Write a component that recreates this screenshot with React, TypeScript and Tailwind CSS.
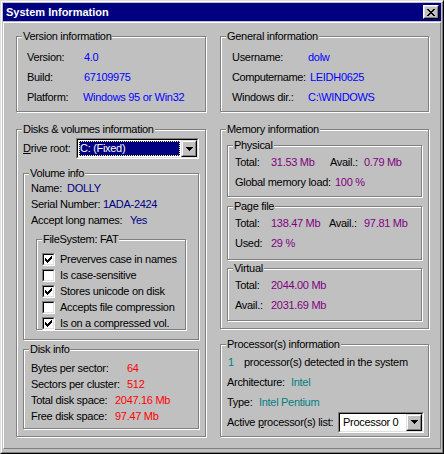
import React from "react";

// Win95-style "System Information" dialog

function Group({
  title,
  className = "",
  children,
}: {
  title: string;
  className?: string;
  children?: React.ReactNode;
}) {
  return (
    <div
      className={`relative shrink-0 border border-[#808080] shadow-[inset_1px_1px_0_#fff,1px_1px_0_#fff] ${className}`}
    >
      <span className="absolute left-[5px] top-[-7px] bg-[#c0c0c0] px-px leading-[13px] whitespace-nowrap">
        {title}
      </span>
      {children}
    </div>
  );
}

function Check({ checked }: { checked?: boolean }) {
  return (
    <div className="h-[13px] w-[13px] shrink-0 border border-t-[#808080] border-l-[#808080] border-r-white border-b-white">
      <div className="flex h-full w-full items-center justify-center border border-t-black border-l-black border-r-[#dfdfdf] border-b-[#dfdfdf] bg-white">
        {checked && (
          <svg width="7" height="7" shapeRendering="crispEdges">
            <rect x="6" y="0" width="1" height="1" />
            <rect x="5" y="1" width="2" height="1" />
            <rect x="0" y="2" width="1" height="1" />
            <rect x="4" y="2" width="3" height="1" />
            <rect x="0" y="3" width="2" height="1" />
            <rect x="3" y="3" width="3" height="1" />
            <rect x="0" y="4" width="5" height="1" />
            <rect x="1" y="5" width="3" height="1" />
            <rect x="2" y="6" width="1" height="1" />
          </svg>
        )}
      </div>
    </div>
  );
}

function DropButton() {
  return (
    <div className="h-full w-[16px] shrink-0 border border-t-[#dfdfdf] border-l-[#dfdfdf] border-r-black border-b-black">
      <div className="flex h-full items-center justify-center border border-t-white border-l-white border-r-[#808080] border-b-[#808080] bg-[#c0c0c0]">
        <svg width="7" height="4" shapeRendering="crispEdges">
          <rect x="0" y="0" width="7" height="1" />
          <rect x="1" y="1" width="5" height="1" />
          <rect x="2" y="2" width="3" height="1" />
          <rect x="3" y="3" width="1" height="1" />
        </svg>
      </div>
    </div>
  );
}

function Combo({
  className,
  text,
  selected,
}: {
  className: string;
  text: string;
  selected?: boolean;
}) {
  return (
    <div
      className={`h-[21px] shrink-0 border border-t-[#808080] border-l-[#808080] border-r-white border-b-white ${className}`}
    >
      <div className="flex h-full border border-t-black border-l-black border-r-[#dfdfdf] border-b-[#dfdfdf] bg-white">
        {selected ? (
          <div className="flex flex-1 p-px">
            <div className="flex-1 border border-dotted border-[#ffff7f] bg-[#000080] leading-[13px] text-white">
              {text}
            </div>
          </div>
        ) : (
          <div className="flex-1 pl-[3px] leading-[17px]">{text}</div>
        )}
        <DropButton />
      </div>
    </div>
  );
}

function Row({
  label,
  labelClass,
  value,
  valueClass,
  h = "h-[20px] leading-[20px]",
}: {
  label: React.ReactNode;
  labelClass: string;
  value: string;
  valueClass: string;
  h?: string;
}) {
  return (
    <div className={`flex whitespace-nowrap ${h}`}>
      <span className={`shrink-0 ${labelClass}`}>{label}</span>
      <span className={valueClass}>{value}</span>
    </div>
  );
}

function LeftColumn() {
  const blue = "text-[#0000ff]";
  const navy = "text-[#000080]";
  const red = "text-[#ff0000]";
  const r16 = "h-[16px] leading-[16px]";
  return (
    <div className="flex w-[190px] shrink-0 flex-col">
      <Group title="Version information" className="h-[76px] w-[190px] pl-[10px] pt-[10px]">
        <Row label="Version:" labelClass="w-[57px]" value="4.0" valueClass={blue} />
        <Row label="Build:" labelClass="w-[57px]" value="67109975" valueClass={blue} />
        <Row label="Platform:" labelClass="w-[56px]" value="Windows 95 or Win32" valueClass={blue} />
      </Group>

      <Group
        title="Disks & volumes information"
        className="mt-[17px] h-[308px] w-[190px] pl-[6px] pt-[8px]"
      >
        <div className="flex h-[21px] items-center">
          <span className="w-[53px] shrink-0 whitespace-nowrap">
            <span className="underline underline-offset-1">D</span>rive root:
          </span>
          <Combo className="w-[123px]" text="C: (Fixed)" selected />
        </div>

        <Group title="Volume info" className="mt-[14px] h-[167px] w-[176px] pl-[7px] pt-[6px]">
          <Row h={r16} label="Name:" labelClass="w-[36px]" value="DOLLY" valueClass={navy} />
          <Row h={r16} label="Serial Number:" labelClass="w-[72px]" value="1ADA-2424" valueClass={navy} />
          <Row h={r16} label="Accept long names:" labelClass="w-[99px]" value="Yes" valueClass={navy} />

          <Group title="FileSystem: FAT" className="ml-[5px] mt-[11px] h-[91px] w-[150px] pl-[5px] pt-[11px]">
            {[
              ["Preverves case in names", true],
              ["Is case-sensitive", false],
              ["Stores unicode on disk", true],
              ["Accepts file compression", false],
              ["Is on a compressed vol.", true],
            ].map(([t, c]) => (
              <div key={t as string} className="flex h-[16px] items-center gap-[5px] whitespace-nowrap leading-[16px]">
                <Check checked={c as boolean} />
                <span>{t as string}</span>
              </div>
            ))}
          </Group>
        </Group>

        <Group title="Disk info" className="mt-[9px] h-[80px] w-[176px] pl-[7px] pt-[10px]">
          <Row h={r16} label="Bytes per sector:" labelClass="w-[96px]" value="64" valueClass={red} />
          <Row h={r16} label="Sectors per cluster:" labelClass="w-[96px]" value="512" valueClass={red} />
          <Row h={r16} label="Total disk space:" labelClass="w-[84px]" value="2047.16 Mb" valueClass={red} />
          <Row h={r16} label="Free disk space:" labelClass="w-[84px]" value="97.47 Mb" valueClass={red} />
        </Group>
      </Group>
    </div>
  );
}

function RightColumn() {
  const blue = "text-[#0000ff]";
  const purple = "text-[#800080]";
  const teal = "text-[#008080]";
  return (
    <div className="flex w-[209px] shrink-0 flex-col">
      <Group title="General information" className="h-[76px] w-[209px] pl-[11px] pt-[10px]">
        <Row label="Username:" labelClass="w-[76px]" value="dolw" valueClass={blue} />
        <Row label="Computername:" labelClass="w-[78px] tracking-[-0.4px]" value="LEIDH0625" valueClass={blue} />
        <Row label="Windows dir.:" labelClass="w-[76px]" value="C:\WINDOWS" valueClass={blue} />
      </Group>

      <Group title="Memory information" className="mt-[17px] h-[200px] w-[209px] pl-[6px] pt-[15px]">
        <Group title="Physical" className="h-[52px] w-[195px] pl-[7px] pt-[6px]">
          <div className="flex h-[20px] whitespace-nowrap leading-[20px]">
            <span className="w-[36px]">Total:</span>
            <span className={`w-[59px] ${purple}`}>31.53 Mb</span>
            <span className="w-[34px]">Avail.:</span>
            <span className={purple}>0.79 Mb</span>
          </div>
          <Row label="Global memory load:" labelClass="w-[100px]" value="100 %" valueClass={purple} />
        </Group>

        <Group title="Page file" className="mt-[9px] h-[54px] w-[195px] pl-[7px] pt-[6px]">
          <div className="flex h-[20px] whitespace-nowrap leading-[20px]">
            <span className="w-[36px]">Total:</span>
            <span className={`w-[58px] ${purple}`}>138.47 Mb</span>
            <span className="w-[35px]">Avail.:</span>
            <span className={purple}>97.81 Mb</span>
          </div>
          <Row label="Used:" labelClass="w-[36px]" value="29 %" valueClass={purple} />
        </Group>

        <Group title="Virtual" className="mt-[8px] h-[53px] w-[195px] pl-[7px] pt-[6px]">
          <Row label="Total:" labelClass="w-[36px]" value="2044.00 Mb" valueClass={purple} />
          <Row label="Avail.:" labelClass="w-[36px]" value="2031.69 Mb" valueClass={purple} />
        </Group>
      </Group>

      <Group title="Processor(s) information" className="mt-[15px] h-[93px] w-[209px] pl-[6px] pt-[7px]">
        <div className="ml-px flex h-[20px] whitespace-nowrap leading-[20px]">
          <span className={`w-[16px] ${teal}`}>1</span>
          <span>processor(s) detected in the system</span>
        </div>
        <Row label="Architecture:" labelClass="w-[64px]" value="Intel" valueClass={teal} />
        <Row label="Type:" labelClass="w-[32px]" value="Intel Pentium" valueClass={teal} />
        <div className="flex h-[20px] items-center whitespace-nowrap">
          <span className="w-[111px] shrink-0">
            Active <span className="underline underline-offset-1">p</span>rocessor(s) list:
          </span>
          <Combo className="w-[86px]" text="Processor 0" />
        </div>
      </Group>
    </div>
  );
}

export default function App() {
  return (
    <div className="h-[454px] w-[444px] select-none border border-t-[#dfdfdf] border-l-[#dfdfdf] border-r-black border-b-black bg-[#c0c0c0] font-['Liberation_Sans',Arial,sans-serif] text-[11px] tracking-[-0.3px] text-black">
      <div className="flex h-full flex-col border border-t-white border-l-white border-r-[#808080] border-b-[#808080] p-px">
        <div className="flex h-[18px] shrink-0 items-center justify-between bg-[#000080] pl-[3px] pr-[2px]">
          <span className="font-bold tracking-normal text-white">System Information</span>
          <div className="h-[14px] w-[16px] border border-t-white border-l-white border-r-black border-b-black">
            <div className="flex h-full items-center justify-center border border-t-[#dfdfdf] border-l-[#dfdfdf] border-r-[#808080] border-b-[#808080] bg-[#c0c0c0]">
              <svg width="8" height="7" shapeRendering="crispEdges">
                <rect x="0" y="0" width="2" height="1" />
                <rect x="6" y="0" width="2" height="1" />
                <rect x="1" y="1" width="2" height="1" />
                <rect x="5" y="1" width="2" height="1" />
                <rect x="2" y="2" width="4" height="1" />
                <rect x="3" y="3" width="2" height="1" />
                <rect x="2" y="4" width="4" height="1" />
                <rect x="1" y="5" width="2" height="1" />
                <rect x="5" y="5" width="2" height="1" />
                <rect x="0" y="6" width="2" height="1" />
                <rect x="6" y="6" width="2" height="1" />
              </svg>
            </div>
          </div>
        </div>
        <div className="mt-px flex h-[427px] gap-[14px] border border-t-white border-l-white border-r-[#808080] border-b-[#808080] pl-[12px] pt-[13px]">
          <LeftColumn />
          <RightColumn />
        </div>
      </div>
    </div>
  );
}
